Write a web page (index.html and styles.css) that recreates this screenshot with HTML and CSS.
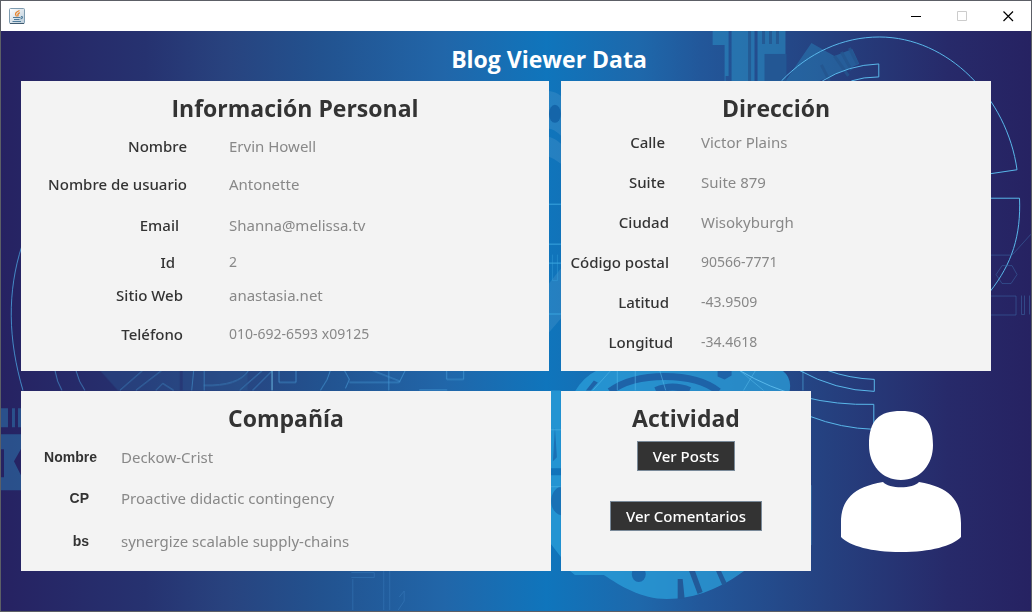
FILE: index.html
```html
<!DOCTYPE html>
<html lang="es">
<head>
<meta charset="utf-8">
<title>Blog Viewer Data</title>
<link rel="stylesheet" href="styles.css">
</head>
<body>
<div class="window">
  <header class="titlebar">
    <svg class="app-icon" viewBox="0 0 16 16" aria-hidden="true">
      <defs><linearGradient id="tile" x1="0" y1="0" x2="1" y2="1"><stop offset="0" stop-color="#fff"/><stop offset="1" stop-color="#b9cbd8"/></linearGradient></defs>
      <rect x=".5" y=".5" width="15" height="15" rx="1" fill="url(#tile)" stroke="#7f9cb0"/>
      <path d="M1 15.500h14" stroke="#3e5a70"/>
      <path d="M10.500 2.500C6.500 4.500 5.500 5.500 7.500 8.500M10.800 4.700C8.500 5.500 8.500 6.500 9 8.500" fill="none" stroke="#e8832a" stroke-width="1.300"/>
      <path d="M4 9.500h7.500M5 11.500h5.500M3.500 13.500h8.500M12 8.700c2-.5 2 1.800-.5 2.300" fill="none" stroke="#4f7c9b" stroke-width="1.200"/>
    </svg>
    <div class="controls">
      <button class="control" aria-label="Minimizar"><svg width="10" height="11" viewBox="0 0 10 11"><path d="M0 5.500h10" stroke="#000"/></svg></button>
      <button class="control" aria-label="Maximizar" disabled><svg width="10" height="11" viewBox="0 0 10 11"><path d="M.5.500h9v9h-9z" fill="none" stroke="#ccc"/></svg></button>
      <button class="control" aria-label="Cerrar"><svg width="11" height="11" viewBox="0 0 11 11"><path d="M.5.500l9.500 9.500M10 .5L.5 10" stroke="#000" stroke-width="1.200"/></svg></button>
    </div>
  </header>

  <main class="content">
    <svg class="backdrop" viewBox="0 31 1032 581" preserveAspectRatio="none" aria-hidden="true">
      <g fill="#2a86bd" opacity=".65">
        <path d="M713 31h16v45h-3V81h-1V45h-12zM732 31h23v50h-23zM758 31h28v53h-21v-3h-7z"/>
        <path d="M812 43l23 13 18-7 7 15-40 17h-34z" opacity=".7"/>
      </g>
      <g stroke="#24558f" stroke-width="3" opacity=".8" fill="none">
        <path d="M750 31v50M764 31v13M771 31v13M778 31v13M835 56l14 20M842 52l10 18M850 48l8 16M822 65l8 16"/>
      </g>
      <path d="M765 54h22v27h-22z" fill="#235794"/>
      <g fill="#fff" opacity=".09">
        <path d="M549 91q8 1 12 5v40q-7-7-12-7zM549 137q7 2 12 7v20q-6-5-12-7zM549 284l12-15v50l-12 14z"/>
      </g>
      <ellipse cx="555" cy="114" rx="6" ry="9" fill="#1565a9"/>
      <g fill="none" stroke="#39a5df" stroke-width="1">
        <path d="M549 204.500h12M549 244.500h12M549 263.500h12M549 314.500h12" />
        <path d="M552.500 255v26h5v-26" opacity=".4"/>
      </g>

      <g fill="#2ba1dc" opacity=".72">
        <path d="M575 392q9-15 22-21h186q10 8 7 21z"/>
        <path d="M551 391h10v78h-10zM551 476h10v82l-10-13z"/>
        <path d="M569 571h177c-23 17-49 29-79 29-26 0-46-13-63-24h-29z"/>
      </g>
      <path d="M610 392q20-15 55-15t54 15M656 391q17-7 34 0" fill="none" stroke="#1e63a8" stroke-width="7"/>
      <path d="M718 371h14v5l-7 4-7-3zM586 391l8-10 4 2-7 8z" fill="#1e63a8"/>
      <path d="M561 487c-13 4-13 26 0 29zM555 428l2 30-4 4z" fill="#1971b5"/>
      <ellipse cx="639" cy="575" rx="7" ry="8" fill="#1b67ab"/>
      <path d="M678 580h5l2 20h-7zM689 571h6l8 22-5 2zM716 571h5l6 13-4 3z" fill="#225a99"/>
      <g fill="none" stroke="#55b9e9" opacity=".8">
        <path d="M593 391l18-20M660 371l6 20M617.500 371v20M635.500 371v20M740 371l24 20M756 371l-12 20M803.500 371v20M551 430.500h10M551 487.500h10M811.500 486v60" stroke-width=".7"/>
      </g>

      <g fill="none" stroke="#59b8ea" stroke-width="1">
        <path d="M782 81C809 53 843 37 880 37C949 37 1008 98 1018 170L991 174"/>
        <path d="M823 81Q849 65 879.500 64v13Q864 77 852 81"/>
        <path d="M991 198.500h29.500C1022 236 1013 264 991 292"/>
        <path d="M828 371q22 8 47 9v12q-39-1-75-21M740 371q60 36 134.500 34v25q-33-1-64-13"/>
      </g>
      <g fill="none" stroke="#3c69a5" stroke-width="1" opacity=".55">
        <path d="M991 255.500h22l19-21M1003 266l10 0 5 9-6 9h-9l-6-9zM991 296.500h26v19h-26M1022.500 296v19h3v-19M1030.500 296v19"/>
      </g>

      <g fill="none" stroke="#4b9fda" stroke-width="1" opacity=".85">
        <path d="M21 246C6 292 7 340 22 391"/>
        <path d="M54 371q2 12 7 20M75 371q3 12 9 20M119 391l23-20M135 391l26-20M193 371l-2 20M203.500 371v20M203 386q35 1 45-15M239 391l23-20M252 391l20-20M320 391q8-11 10-20M155 391l7-7 11 7" opacity=".8"/>
        <path d="M271.500 371v20" stroke="#7bd1f5"/>
        <path d="M278.500 371v12h17v-12M344 371l5 9-4 9M349 383h50l6-12M372 371l28 11M388.500 371v20M446.500 371v9h17v-9M419 390.500h28" opacity=".8"/>
      </g>
      <path d="M99 371h80v20h-62zM182 371h65v20h-65z" fill="#2c649c" opacity=".3"/>
      <g fill="#2e77ad" opacity=".55">
        <path d="M0 409h7v19H0zM11 409h3v19h-3zM17 409h4v19h-4zM0 435h21v13l-8 14 8 16v13H0v-13h3v-28H0z"/>
      </g>
      <g fill="none" stroke="#3a7dbd" opacity=".5">
        <path d="M351 573.500h23v5h-23M352.500 580v31M383.500 571v40M389.500 571v40M398 611l6-9v-10l-5 6"/>
      </g>
    </svg>

    <h1 class="page-title">Blog Viewer Data</h1>

    <div class="row row-top">
      <section class="panel personal">
        <h2>Información Personal</h2>
        <dl class="fields">
          <dt>Nombre</dt><dd>Ervin Howell</dd>
          <dt>Nombre de usuario</dt><dd>Antonette</dd>
          <dt class="inset-m">Email</dt><dd>Shanna@melissa.tv</dd>
          <dt class="inset-l">Id</dt><dd class="number">2</dd>
          <dt class="inset-s">Sitio Web</dt><dd>anastasia.net</dd>
          <dt class="inset-s">Teléfono</dt><dd class="number">010-692-6593 x09125</dd>
        </dl>
      </section>

      <section class="panel address">
        <h2>Dirección</h2>
        <dl class="fields">
          <dt class="inset-m">Calle</dt><dd>Victor Plains</dd>
          <dt class="inset-m">Suite</dt><dd>Suite 879</dd>
          <dt class="inset-s">Ciudad</dt><dd>Wisokyburgh</dd>
          <dt class="inset-s">Código postal</dt><dd class="number">90566-7771</dd>
          <dt class="inset-s">Latitud</dt><dd class="number">-43.9509</dd>
          <dt>Longitud</dt><dd class="number">-34.4618</dd>
        </dl>
      </section>
    </div>

    <div class="row row-bottom">
      <section class="panel company">
        <h2>Compañía</h2>
        <dl class="fields">
          <dt>Nombre</dt><dd>Deckow-Crist</dd>
          <dt class="inset-m">CP</dt><dd>Proactive didactic contingency</dd>
          <dt class="inset-m">bs</dt><dd>synergize scalable supply-chains</dd>
        </dl>
      </section>

      <section class="panel activity">
        <h2>Actividad</h2>
        <div class="actions">
          <button class="action">Ver Posts</button>
          <button class="action">Ver Comentarios</button>
        </div>
      </section>

      <svg class="avatar" viewBox="0 0 120 141" role="img" aria-label="Usuario">
        <path fill="#fff" d="M60 0C82 0 92 9 92 34C92 54 79 69 60 69C41 69 28 54 28 34C28 9 38 0 60 0ZM42 71C48 78 72 78 78 71C108 76 120 89 120 112V126C111 135 90 141 60 141C30 141 9 135 0 126V112C0 89 12 76 42 71Z"/>
      </svg>
    </div>
  </main>
</div>
</body>
</html>
```

FILE: styles.css
```css
* { box-sizing: border-box; }

body {
  margin: 0;
  font-family: "Noto Sans", "Open Sans", sans-serif;
  font-size: 15px;
  color: #333;
}

.window {
  display: flex;
  flex-direction: column;
  min-height: 100vh;
  border: 1px solid #5c5f66;
}

.titlebar {
  display: flex;
  align-items: center;
  justify-content: space-between;
  height: 30px;
  padding-left: 8px;
  background: #fff;
}

.app-icon { width: 16px; height: 16px; }

.controls { display: flex; height: 100%; }

.control {
  display: flex;
  align-items: center;
  justify-content: center;
  width: 46px;
  padding: 0;
  border: 0;
  background: transparent;
}

.content {
  position: relative;
  flex: 1;
  padding: 8px 40px 40px 20px;
  background: linear-gradient(90deg, #262262 0%, #263270 14%, #28437f 22%, #22528f 31%, #2166a9 43%, #0f75bc 53%, #1e68ab 62%, #22579a 68%, #254180 80%, #272a6a 92%, #262262 100%);
}

.backdrop {
  position: absolute;
  inset: 0;
  width: 100%;
  height: 100%;
}

.page-title,
.panel h2 {
  position: relative;
  margin: 0;
  font-family: "Open Sans", "Noto Sans", sans-serif;
  font-size: 23px;
  font-weight: 700;
  line-height: 40px;
  text-align: center;
}

.page-title {
  padding: 0 0 2px 86px;
  color: #fff;
}

.row { position: relative; display: grid; }

.row-top {
  grid-template-columns: 528fr 430fr;
  column-gap: 12px;
}

.row-bottom {
  grid-template-columns: 530fr 250fr 170fr;
  column-gap: 10px;
  margin-top: 20px;
}

.panel { padding-top: 7px; background: #f3f3f3; }

.fields {
  display: grid;
  align-items: center;
  margin: 0;
  line-height: 20px;
}

.fields dt { text-align: right; font-weight: 500; }
.fields dd { margin: 0; color: #888; }
.fields .number { font-size: 14px; }

.fields .inset-s { padding-right: 4px; }
.fields .inset-m { padding-right: 8px; }
.fields .inset-l { padding-right: 12px; }

.personal h2 { padding-left: 20px; }

.personal .fields {
  grid-template-columns: 166px 1fr;
  grid-template-rows: 36px 40px 42px 32px 34px 44px;
  column-gap: 42px;
}

.address .fields {
  grid-template-columns: 112px 1fr;
  grid-auto-rows: 40px;
  column-gap: 28px;
  margin-top: -6px;
  padding-bottom: 9px;
}

.company .fields {
  grid-template-columns: 76px 1fr;
  grid-template-rows: 40px 42px 44px;
  column-gap: 24px;
  margin-top: -1px;
  padding-bottom: 8px;
}

.company dt {
  font-family: "Liberation Sans", Arial, sans-serif;
  font-size: 14px;
  font-weight: 700;
}

.actions {
  display: flex;
  flex-direction: column;
  align-items: center;
  gap: 30px;
  padding-top: 3px;
}

.action {
  height: 30px;
  padding: 0 15px;
  border: 1px solid #7a8a99;
  background: #333;
  color: #fff;
  font: 500 15px/20px "Noto Sans", "Open Sans", sans-serif;
}

.avatar { width: 120px; height: 141px; margin: 20px 0 0 20px; }
```
